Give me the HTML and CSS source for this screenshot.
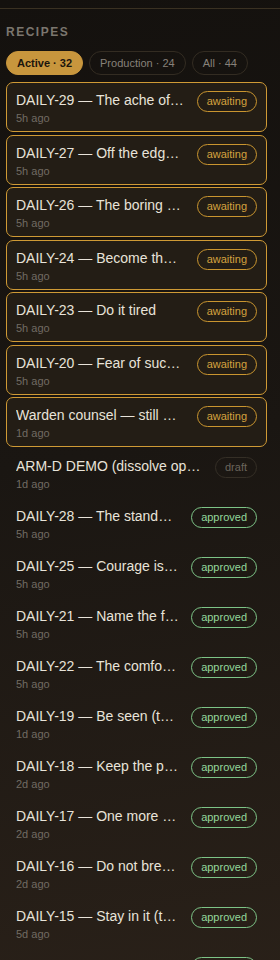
FILE: index.html
```html
<!DOCTYPE html>
<html lang="en">
<head>
  <meta charset="UTF-8">
  <meta name="viewport" content="width=device-width, initial-scale=1.0">
  <title>Recipes</title>
  <link rel="stylesheet" href="styles.css">
</head>
<body>

<div class="topbar"></div>

<section class="panel">
  <h2 class="panel-title">Recipes</h2>

  <div class="tabs">
    <span class="tab active">Active · 32</span>
    <span class="tab">Production · 24</span>
    <span class="tab">All · 44</span>
  </div>

  <ul class="recipes">
    <li class="recipe pending">
      <div class="info"><div class="name">DAILY-29 — The ache of wanting</div><div class="time">5h ago</div></div>
      <span class="badge awaiting">awaiting</span>
    </li>
    <li class="recipe pending">
      <div class="info"><div class="name">DAILY-27 — Off the edge of the map</div><div class="time">5h ago</div></div>
      <span class="badge awaiting">awaiting</span>
    </li>
    <li class="recipe pending">
      <div class="info"><div class="name">DAILY-26 — The boring middle</div><div class="time">5h ago</div></div>
      <span class="badge awaiting">awaiting</span>
    </li>
    <li class="recipe pending">
      <div class="info"><div class="name">DAILY-24 — Become the one who stays</div><div class="time">5h ago</div></div>
      <span class="badge awaiting">awaiting</span>
    </li>
    <li class="recipe pending">
      <div class="info"><div class="name">DAILY-23 — Do it tired</div><div class="time">5h ago</div></div>
      <span class="badge awaiting">awaiting</span>
    </li>
    <li class="recipe pending">
      <div class="info"><div class="name">DAILY-20 — Fear of success</div><div class="time">5h ago</div></div>
      <span class="badge awaiting">awaiting</span>
    </li>
    <li class="recipe pending">
      <div class="info"><div class="name">Warden counsel — still water</div><div class="time">1d ago</div></div>
      <span class="badge awaiting">awaiting</span>
    </li>
    <li class="recipe">
      <div class="info"><div class="name">ARM-D DEMO (dissolve opening)</div><div class="time">1d ago</div></div>
      <span class="badge draft">draft</span>
    </li>
    <li class="recipe">
      <div class="info"><div class="name">DAILY-28 — The standard you keep</div><div class="time">5h ago</div></div>
      <span class="badge approved">approved</span>
    </li>
    <li class="recipe">
      <div class="info"><div class="name">DAILY-25 — Courage is quiet</div><div class="time">5h ago</div></div>
      <span class="badge approved">approved</span>
    </li>
    <li class="recipe">
      <div class="info"><div class="name">DAILY-21 — Name the fear</div><div class="time">5h ago</div></div>
      <span class="badge approved">approved</span>
    </li>
    <li class="recipe">
      <div class="info"><div class="name">DAILY-22 — The comfort trap</div><div class="time">5h ago</div></div>
      <span class="badge approved">approved</span>
    </li>
    <li class="recipe">
      <div class="info"><div class="name">DAILY-19 — Be seen (the hard way)</div><div class="time">1d ago</div></div>
      <span class="badge approved">approved</span>
    </li>
    <li class="recipe">
      <div class="info"><div class="name">DAILY-18 — Keep the promise</div><div class="time">2d ago</div></div>
      <span class="badge approved">approved</span>
    </li>
    <li class="recipe">
      <div class="info"><div class="name">DAILY-17 — One more rep</div><div class="time">2d ago</div></div>
      <span class="badge approved">approved</span>
    </li>
    <li class="recipe">
      <div class="info"><div class="name">DAILY-16 — Do not break the chain</div><div class="time">2d ago</div></div>
      <span class="badge approved">approved</span>
    </li>
    <li class="recipe">
      <div class="info"><div class="name">DAILY-15 — Stay in it (till the end)</div><div class="time">5d ago</div></div>
      <span class="badge approved">approved</span>
    </li>
    <li class="recipe">
      <div class="info"><div class="name">DAILY-14 — Start before ready</div><div class="time">5d ago</div></div>
      <span class="badge approved">approved</span>
    </li>
  </ul>
</section>

</body>
</html>
```

FILE: styles.css
```css
html {
  background: #15120f;
}

body {
  margin: 0;
  padding: 0;
  min-height: 960px;
  font-family: "Liberation Sans", Arial, sans-serif;
  color: #e8e3d9;
  background: linear-gradient(170deg, #14110e 0%, #1a1612 45%, #2a2119 100%);
}

.topbar {
  height: 8px;
  border-bottom: 1px solid #3a3122;
}

.panel {
  padding: 0 13px 0 6px;
}

.panel-title {
  margin: 16px 0 0;
  font-size: 12px;
  line-height: 14px;
  font-weight: bold;
  letter-spacing: 1.5px;
  text-transform: uppercase;
  color: #7b766e;
}

.tabs {
  display: flex;
  gap: 6px;
  margin-top: 12px;
}

.tab {
  height: 22px;
  line-height: 22px;
  padding: 0 10px;
  border: 1px solid #332c22;
  border-radius: 12px;
  font-size: 11px;
  color: #87817a;
}

.tab.active {
  background: #c8963d;
  border-color: #c8963d;
  color: #1b150d;
  font-weight: bold;
}

.recipes {
  list-style: none;
  margin: 7px 0 0;
  padding: 0;
  display: flex;
  flex-direction: column;
  gap: 2.5px;
}

.recipe {
  display: flex;
  align-items: flex-start;
  gap: 12px;
  padding: 7px 10px 6.5px;
}

.recipe.pending {
  padding: 8px 9px 6px;
  background: #231d15;
  border: 1px solid #cf9a35;
  border-radius: 7px;
}

.info {
  flex: 1;
  min-width: 0;
}

.name {
  font-size: 14px;
  line-height: 18px;
  white-space: nowrap;
  overflow: hidden;
  text-overflow: ellipsis;
}

.time {
  margin-top: 2px;
  font-size: 11px;
  line-height: 14px;
  color: #716b63;
}

.badge {
  flex-shrink: 0;
  height: 19px;
  line-height: 19px;
  padding: 0 9px;
  border: 1px solid;
  border-radius: 11px;
  font-size: 11px;
}

.badge.awaiting {
  color: #d4a23f;
  border-color: #c9952f;
}

.badge.approved {
  color: #93d79b;
  border-color: #7dc487;
}

.badge.draft {
  color: #6b655c;
  border-color: #352f26;
}
```
